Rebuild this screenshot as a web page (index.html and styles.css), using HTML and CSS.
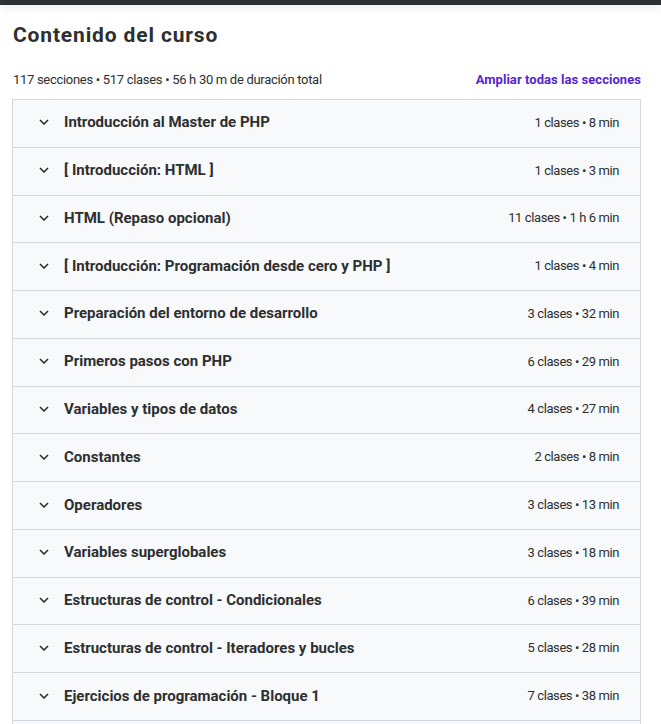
FILE: index.html
```html
<!DOCTYPE html>
<html lang="es">
<head>
<meta charset="utf-8">
<title>Contenido del curso</title>
<link rel="stylesheet" href="styles.css">
</head>
<body>
<div class="topbar"></div>
<main class="content">
  <h2 class="title">Contenido del curso</h2>
  <div class="meta">
    <span class="stats">117 secciones • 517 clases • 56 h 30 m de duración total</span>
    <button class="expand">Ampliar todas las secciones</button>
  </div>
  <div class="accordion">
    <div class="row"><span class="chev"><svg viewBox="0 0 10 6" width="10" height="6"><path d="M1 1l4 4 4-4" fill="none" stroke="#2d2f31" stroke-width="1.6"/></svg></span><span class="name">Introducción al Master de PHP</span><span class="info">1 clases • 8 min</span></div>
    <div class="row"><span class="chev"><svg viewBox="0 0 10 6" width="10" height="6"><path d="M1 1l4 4 4-4" fill="none" stroke="#2d2f31" stroke-width="1.6"/></svg></span><span class="name">[ Introducción: HTML ]</span><span class="info">1 clases • 3 min</span></div>
    <div class="row"><span class="chev"><svg viewBox="0 0 10 6" width="10" height="6"><path d="M1 1l4 4 4-4" fill="none" stroke="#2d2f31" stroke-width="1.6"/></svg></span><span class="name">HTML (Repaso opcional)</span><span class="info">11 clases • 1 h 6 min</span></div>
    <div class="row"><span class="chev"><svg viewBox="0 0 10 6" width="10" height="6"><path d="M1 1l4 4 4-4" fill="none" stroke="#2d2f31" stroke-width="1.6"/></svg></span><span class="name">[ Introducción: Programación desde cero y PHP ]</span><span class="info">1 clases • 4 min</span></div>
    <div class="row"><span class="chev"><svg viewBox="0 0 10 6" width="10" height="6"><path d="M1 1l4 4 4-4" fill="none" stroke="#2d2f31" stroke-width="1.6"/></svg></span><span class="name">Preparación del entorno de desarrollo</span><span class="info">3 clases • 32 min</span></div>
    <div class="row"><span class="chev"><svg viewBox="0 0 10 6" width="10" height="6"><path d="M1 1l4 4 4-4" fill="none" stroke="#2d2f31" stroke-width="1.6"/></svg></span><span class="name">Primeros pasos con PHP</span><span class="info">6 clases • 29 min</span></div>
    <div class="row"><span class="chev"><svg viewBox="0 0 10 6" width="10" height="6"><path d="M1 1l4 4 4-4" fill="none" stroke="#2d2f31" stroke-width="1.6"/></svg></span><span class="name">Variables y tipos de datos</span><span class="info">4 clases • 27 min</span></div>
    <div class="row"><span class="chev"><svg viewBox="0 0 10 6" width="10" height="6"><path d="M1 1l4 4 4-4" fill="none" stroke="#2d2f31" stroke-width="1.6"/></svg></span><span class="name">Constantes</span><span class="info">2 clases • 8 min</span></div>
    <div class="row"><span class="chev"><svg viewBox="0 0 10 6" width="10" height="6"><path d="M1 1l4 4 4-4" fill="none" stroke="#2d2f31" stroke-width="1.6"/></svg></span><span class="name">Operadores</span><span class="info">3 clases • 13 min</span></div>
    <div class="row"><span class="chev"><svg viewBox="0 0 10 6" width="10" height="6"><path d="M1 1l4 4 4-4" fill="none" stroke="#2d2f31" stroke-width="1.6"/></svg></span><span class="name">Variables superglobales</span><span class="info">3 clases • 18 min</span></div>
    <div class="row"><span class="chev"><svg viewBox="0 0 10 6" width="10" height="6"><path d="M1 1l4 4 4-4" fill="none" stroke="#2d2f31" stroke-width="1.6"/></svg></span><span class="name">Estructuras de control - Condicionales</span><span class="info">6 clases • 39 min</span></div>
    <div class="row"><span class="chev"><svg viewBox="0 0 10 6" width="10" height="6"><path d="M1 1l4 4 4-4" fill="none" stroke="#2d2f31" stroke-width="1.6"/></svg></span><span class="name">Estructuras de control - Iteradores y bucles</span><span class="info">5 clases • 28 min</span></div>
    <div class="row"><span class="chev"><svg viewBox="0 0 10 6" width="10" height="6"><path d="M1 1l4 4 4-4" fill="none" stroke="#2d2f31" stroke-width="1.6"/></svg></span><span class="name">Ejercicios de programación - Bloque 1</span><span class="info">7 clases • 38 min</span></div>
    <div class="row"></div>
  </div>
</main>
</body>
</html>
```

FILE: styles.css
```css
html, body {
  margin: 0;
  padding: 0;
  background: #ffffff;
  overflow: hidden;
}
body {
  font-family: Roboto, "Liberation Sans", sans-serif;
  color: #2d2f31;
  height: 724px;
}
.topbar {
  height: 5px;
  background: #2d2f31;
  box-shadow: 0 2px 8px rgba(0, 0, 0, 0.12);
  position: relative;
  z-index: 2;
}
.content {
  padding: 0 20px 0 12px;
}
.title {
  margin: 0;
  padding: 17px 0 0 1px;
  font-size: 21px;
  line-height: 26px;
  font-weight: 700;
  letter-spacing: 0.85px;
}
.meta {
  display: flex;
  justify-content: space-between;
  align-items: center;
  margin-top: 21px;
  height: 20px;
  margin-bottom: 10px;
}
.stats {
  font-size: 13px;
  letter-spacing: -0.3px;
  padding-left: 1px;
}
.expand {
  border: 0;
  background: none;
  padding: 0;
  font-family: inherit;
  font-size: 13px;
  font-weight: 700;
  color: #5624d0;
  letter-spacing: 0.05px;
}
.accordion {
  border: 1px solid #d1d7dc;
  border-bottom: 0;
}
.row {
  display: flex;
  align-items: center;
  box-sizing: border-box;
  height: 47.77px;
  background: #f7f9fa;
  border-bottom: 1px solid #d1d7dc;
  padding: 0 21px 2px 26px;
}
.chev {
  display: flex;
  width: 25px;
  flex: none;
}
.name {
  flex: 1;
  font-size: 15px;
  font-weight: 700;
  letter-spacing: 0;
}
.info {
  font-size: 13px;
  letter-spacing: -0.4px;
}
```
